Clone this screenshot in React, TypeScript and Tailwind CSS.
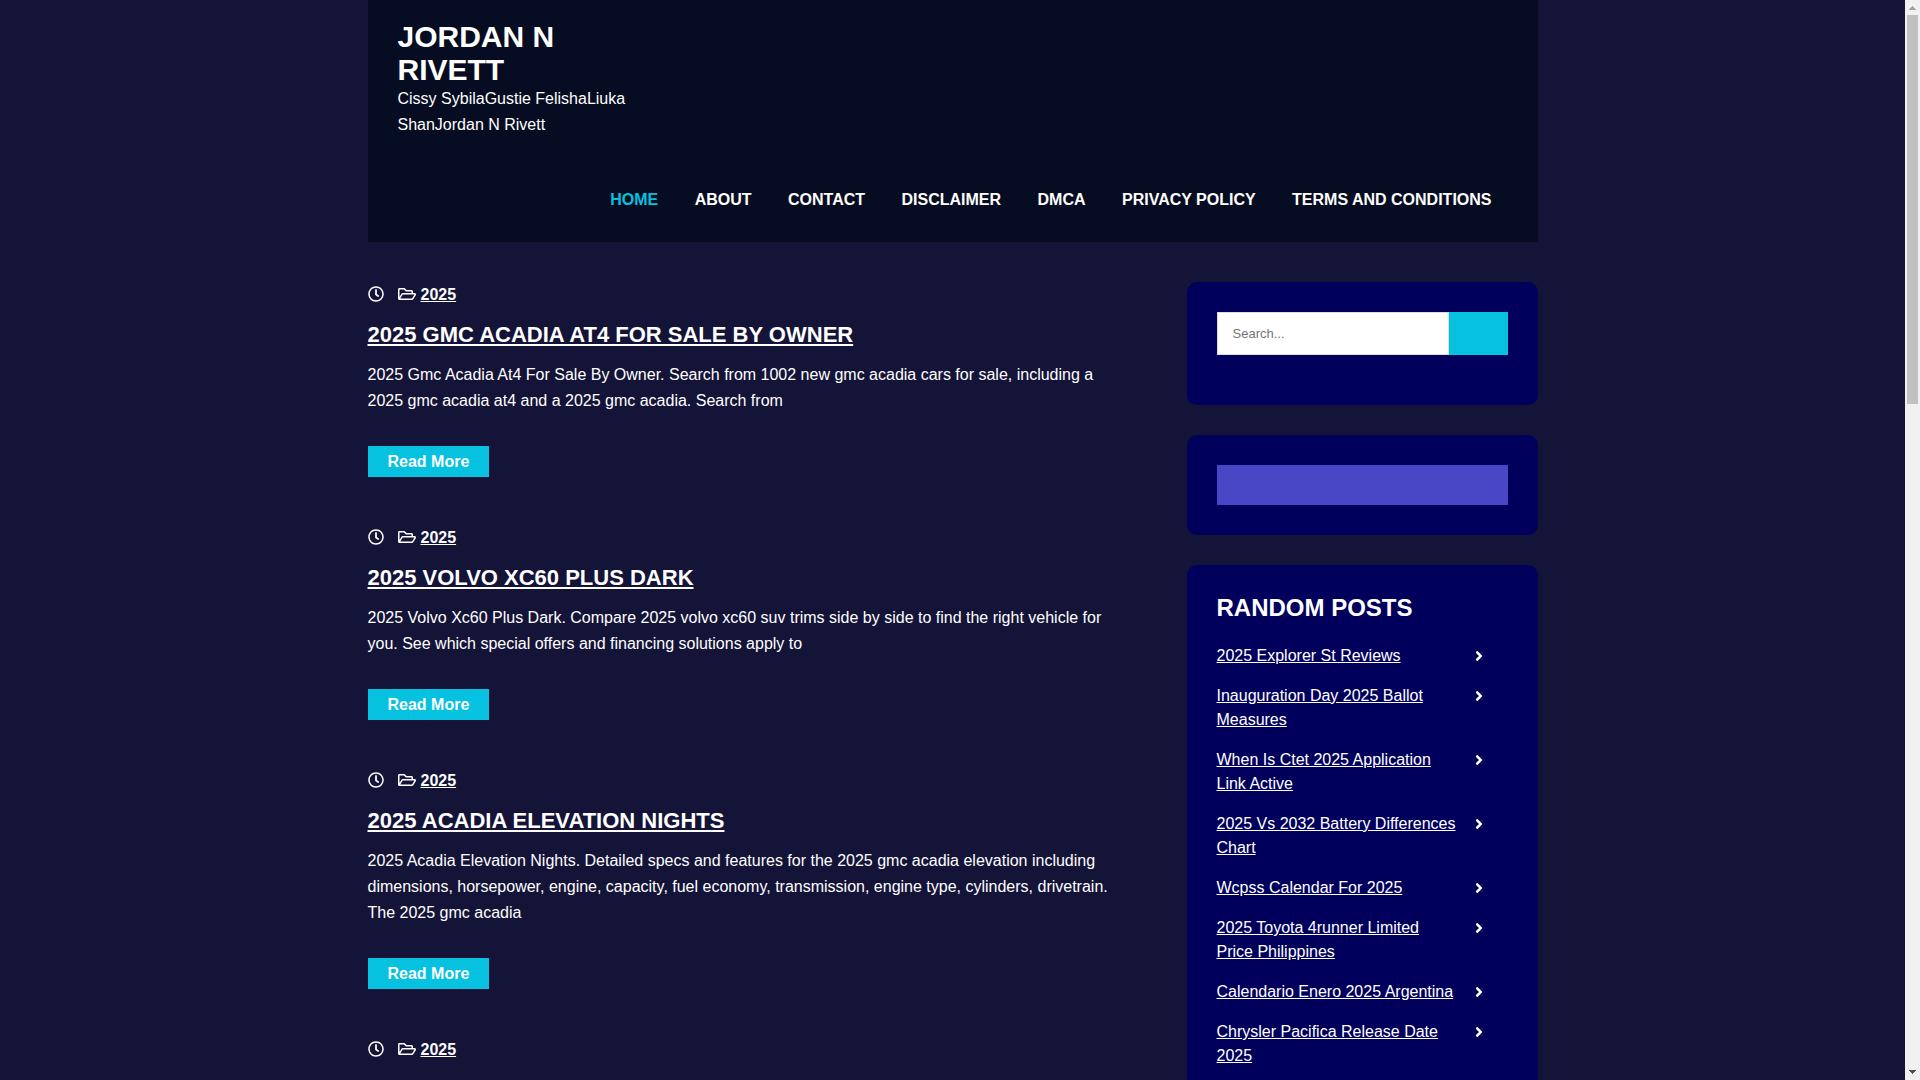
import { FaAngleRight, FaRegClock, FaRegFolderOpen } from "react-icons/fa";

type Post = {
  category: string;
  title?: string;
  excerpt?: string;
};

const navItems = ["Home", "About", "Contact", "Disclaimer", "DMCA", "Privacy Policy", "Terms and Conditions"];

const posts: Post[] = [
  {
    category: "2025",
    title: "2025 Gmc Acadia At4 For Sale By Owner",
    excerpt:
      "2025 Gmc Acadia At4 For Sale By Owner. Search from 1002 new gmc acadia cars for sale, including a 2025 gmc acadia at4 and a 2025 gmc acadia. Search from",
  },
  {
    category: "2025",
    title: "2025 Volvo Xc60 Plus Dark",
    excerpt:
      "2025 Volvo Xc60 Plus Dark. Compare 2025 volvo xc60 suv trims side by side to find the right vehicle for you. See which special offers and financing solutions apply to",
  },
  {
    category: "2025",
    title: "2025 Acadia Elevation Nights",
    excerpt:
      "2025 Acadia Elevation Nights. Detailed specs and features for the 2025 gmc acadia elevation including dimensions, horsepower, engine, capacity, fuel economy, transmission, engine type, cylinders, drivetrain. The 2025 gmc acadia",
  },
  { category: "2025" },
];

const randomPosts = [
  "2025 Explorer St Reviews",
  "Inauguration Day 2025 Ballot Measures",
  "When Is Ctet 2025 Application Link Active",
  "2025 Vs 2032 Battery Differences Chart",
  "Wcpss Calendar For 2025",
  "2025 Toyota 4runner Limited Price Philippines",
  "Calendario Enero 2025 Argentina",
  "Chrysler Pacifica Release Date 2025",
];

function Header() {
  return (
    <header className="bg-[#060c21] px-[30px] pt-5 pb-[29px]">
      <div className="max-w-60">
        <h1 className="text-[30px] leading-[33px] font-bold uppercase">
          <a href="#">Jordan N Rivett</a>
        </h1>
        <p>Cissy SybilaGustie FelishaLiuka ShanJordan N Rivett</p>
      </div>
      <nav className="mt-[49px]">
        <ul className="text-right">
          {navItems.map((item, i) => [
            <li key={item} className="inline-block px-4 align-top">
              <a href="#" className={i === 0 ? "font-bold uppercase text-[#06c1df]" : "font-bold uppercase"}>
                {item}
              </a>
            </li>,
            " ",
          ])}
        </ul>
      </nav>
    </header>
  );
}

function PostCard({ post }: { post: Post }) {
  return (
    <article>
      <div className="flex items-center">
        <FaRegClock className="mb-0.5 size-4" />
        <FaRegFolderOpen className="mb-0.5 ml-[14px] h-4 w-[18px]" />
        <a href="#" className="ml-[5px] font-bold underline">
          {post.category}
        </a>
      </div>
      {post.title && (
        <>
          <h2 className="mt-[14px] text-[22px] leading-[26px] font-bold uppercase">
            <a href="#" className="underline">
              {post.title}
            </a>
          </h2>
          <p className="mt-[14px]">{post.excerpt}</p>
          <a href="#" className="mt-8 inline-block bg-[#06c1df] px-5 align-top leading-[31px] font-bold">
            Read More
          </a>
        </>
      )}
    </article>
  );
}

function Sidebar() {
  return (
    <aside className="flex w-[30%] flex-col gap-[30px]">
      <section className="rounded-[10px] bg-[#00005c] p-[30px] pb-[50px]">
        <form className="flex" onSubmit={(e) => e.preventDefault()}>
          <input
            type="search"
            aria-label="Search"
            placeholder="Search..."
            className="h-[43px] min-w-0 flex-1 border border-[#dddddd] bg-white px-[15px] text-[13px] text-black placeholder:text-[#757575]"
          />
          <button type="submit" aria-label="Search" className="w-[59px] bg-[#06c1df]" />
        </form>
      </section>

      <section className="rounded-[10px] bg-[#00005c] p-[30px]">
        <div className="h-10 bg-[#4a47c6]" />
      </section>

      <section className="rounded-[10px] bg-[#00005c] p-[30px]">
        <h2 className="text-2xl leading-[26px] font-bold uppercase">Random Posts</h2>
        <ul className="mt-[23px] flex flex-col gap-4 leading-6">
          {randomPosts.map((title) => (
            <li key={title} className="flex items-start justify-between pr-[21px]">
              <a href="#" className="w-[242px] underline">
                {title}
              </a>
              <FaAngleRight className="mt-1 size-4" />
            </li>
          ))}
        </ul>
      </section>
    </aside>
  );
}

function ScrollTrack() {
  return (
    <div className="flex w-[15px] shrink-0 flex-col items-center bg-[#f1f1f1]" aria-hidden="true">
      <svg className="h-[15px] w-[15px] shrink-0" viewBox="0 0 15 15" shapeRendering="crispEdges">
        <path d="M7 6h1v1h1v1h1v1h1v1H4V9h1V8h1V7h1z" fill="#a3a3a3" />
      </svg>
      <div className="h-[36%] w-[11px] bg-[#c1c1c1]" />
      <svg className="mt-auto h-[15px] w-[15px] shrink-0" viewBox="0 0 15 15" shapeRendering="crispEdges">
        <path d="M4 5h7v1h-1v1H9v1H8v1H7V8H6V7H5V6H4z" fill="#505050" />
      </svg>
    </div>
  );
}

export default function App() {
  return (
    <div className="flex h-screen bg-[#141338] font-['Liberation_Sans',Arial,sans-serif] text-base leading-[26px] text-white">
      <div className="flex-1 overflow-y-auto [scrollbar-width:none]">
        <div className="mx-auto max-w-[1170px]">
          <Header />
          <div className="flex items-start justify-between pt-10">
            <main className="flex w-[65%] flex-col gap-12">
              {posts.map((post, i) => (
                <PostCard key={i} post={post} />
              ))}
            </main>
            <Sidebar />
          </div>
        </div>
      </div>
      <ScrollTrack />
    </div>
  );
}
